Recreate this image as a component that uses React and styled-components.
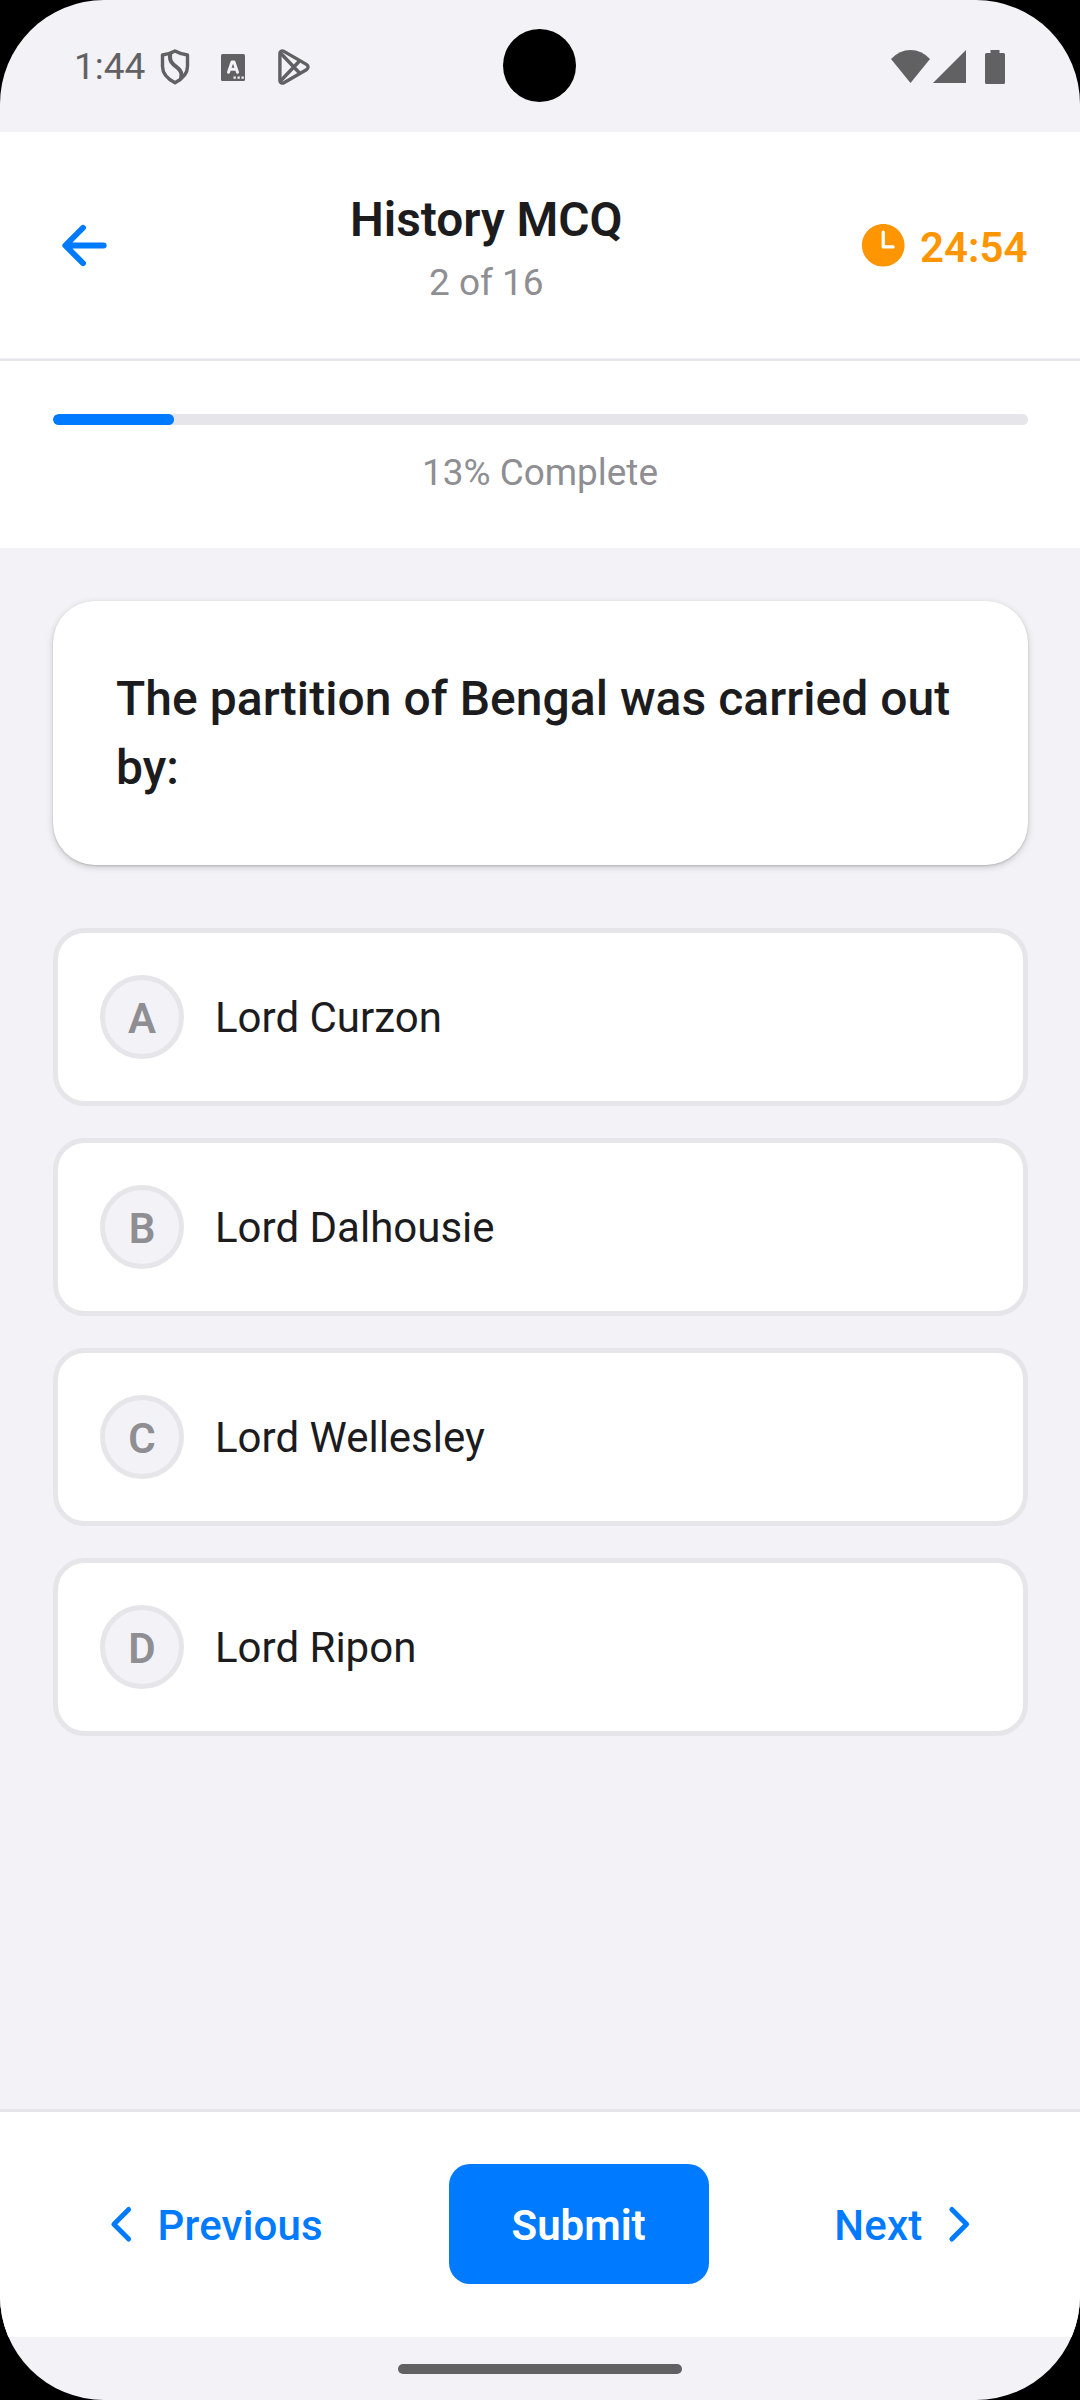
import React from 'react';
import styled, { createGlobalStyle } from 'styled-components';
import { IoArrowBack, IoChevronBack, IoChevronForward, IoTime } from 'react-icons/io5';

const GlobalStyle = createGlobalStyle`
    * {
        box-sizing: border-box;
    }

    body {
        margin: 0;
        background: #000;
        font-family: Roboto, sans-serif;
    }

    button {
        border: 0;
        padding: 0;
        background: none;
        font-family: inherit;
    }

    svg {
        display: block;
        flex-shrink: 0;
    }
`;

const Screen = styled.div`
    position: relative;
    display: flex;
    flex-direction: column;
    width: 1080px;
    height: 2400px;
    overflow: hidden;
    border-radius: 104px;
    background: #f2f2f7;
    color: #1c1c1e;
`;

const StatusBar = styled.div`
    display: flex;
    justify-content: space-between;
    height: 132px;
    padding: 46px 72px 0 74px;
    color: #616163;
`;

const StatusGroup = styled.div`
    display: flex;
    align-items: center;
    height: 42px;
`;

const Clock = styled.span`
    width: 84px;
    font-size: 37px;
    line-height: 42px;
`;

const Camera = styled.div`
    position: absolute;
    top: 29px;
    left: 503px;
    width: 73px;
    height: 73px;
    border-radius: 50%;
    background: #000;
`;

const Header = styled.header`
    display: flex;
    align-items: center;
    justify-content: space-between;
    height: 229px;
    padding: 0 52.5px;
    border-bottom: 2px solid #e5e5ea;
    box-shadow: inset 0 -1px #f2f2f5;
    background: #fff;
`;

const BackButton = styled.button`
    color: #007aff;
`;

const Heading = styled.div`
    padding-top: 5px;
    text-align: center;
`;

const Title = styled.h1`
    margin: 0;
    font-size: 47.8px;
    font-weight: 600;
    line-height: 62px;
`;

const Counter = styled.div`
    margin-top: 7px;
    color: #8e8e93;
    font-size: 37px;
    line-height: 50px;
`;

const Timer = styled.div`
    display: flex;
    align-items: center;
    gap: 10.5px;
    color: #ff9500;
    font-size: 42px;
    font-weight: 600;
    line-height: 56px;
`;

const TimeLeft = styled.span`
    padding-top: 4px;
`;

const Progress = styled.section`
    height: 187px;
    padding: 53px 52.5px 0;
    background: #fff;
`;

const Track = styled.div`
    height: 11px;
    overflow: hidden;
    border-radius: 5.25px;
    background: #e5e5ea;
`;

const Fill = styled.div`
    height: 100%;
    border-radius: 5.25px;
    background: #007aff;
`;

const ProgressLabel = styled.div`
    margin-top: 23px;
    color: #8e8e93;
    font-size: 36.9px;
    line-height: 50px;
    text-align: center;
`;

const Content = styled.main`
    flex: 1;
    padding: 53px 52px 0 53px;
`;

const QuestionCard = styled.div`
    height: 264px;
    padding: 64px 63px 0;
    border-radius: 42px;
    background: #fff;
    box-shadow: 0 2px 7px rgba(0, 0, 0, 0.18), 0 1px 2px rgba(0, 0, 0, 0.14);
`;

const Question = styled.p`
    margin: 0;
    font-size: 48px;
    font-weight: 500;
    letter-spacing: 0.04px;
    line-height: 68.5px;
`;

const Options = styled.div`
    display: flex;
    flex-direction: column;
    gap: 32px;
    margin-top: 63px;
`;

const Option = styled.button`
    display: flex;
    align-items: center;
    gap: 31px;
    height: 178px;
    padding: 0 42px;
    border: 5px solid #e5e5ea;
    border-radius: 31.5px;
    background: #fff;
    color: #1c1c1e;
    font-size: 42px;
    text-align: left;
`;

const Letter = styled.span`
    display: flex;
    align-items: center;
    justify-content: center;
    width: 84px;
    height: 84px;
    padding-top: 2px;
    border: 5px solid #e5e5ea;
    border-radius: 50%;
    background: #f2f2f7;
    color: #8e8e93;
    font-weight: 600;
`;

const Footer = styled.footer`
    display: flex;
    align-items: center;
    justify-content: space-between;
    height: 228px;
    padding: 0 52.5px 1px;
    border-top: 3px solid #e5e5ea;
    background: #fff;
`;

const NavButton = styled.button`
    display: flex;
    align-items: center;
    gap: 10.5px;
    padding: 0 42px;
    color: #007aff;
    font-size: 42px;
    font-weight: 500;
    letter-spacing: 0.2px;
    line-height: 56px;
`;

const NavLabel = styled.span`
    padding-top: 3px;
`;

const SubmitButton = styled.button`
    height: 120px;
    padding: 3px 63px 0;
    border-radius: 21px;
    background: #007aff;
    color: #fff;
    font-size: 42px;
    font-weight: 600;
`;

const GestureBar = styled.div`
    display: flex;
    justify-content: center;
    height: 63px;
    padding-top: 27px;
`;

const Handle = styled.div`
    width: 284px;
    height: 10px;
    border-radius: 5px;
    background: #616163;
`;

const StatusIcon = styled.svg`
    margin-left: ${({ $gap = 0 }) => $gap}px;
`;

const options = [
    { letter: 'A', text: 'Lord Curzon' },
    { letter: 'B', text: 'Lord Dalhousie' },
    { letter: 'C', text: 'Lord Wellesley' },
    { letter: 'D', text: 'Lord Ripon' },
];

function ShieldIcon() {
    return (
        <StatusIcon $gap={2} width="30" height="36" viewBox="0 0 30 36" fill="none" stroke="currentColor" strokeWidth="3.4" strokeLinejoin="round">
            <path d="M15 2C11.5 4 7 5.500 2.500 6v11.500c0 7 5 12.300 12.500 16.300 7.500-4 12.500-9.300 12.500-16.300V6C23 5.500 18.500 4 15 2Z" />
            <path d="M10.500 4c-1.500 5.500-.5 8.500 3 11.500l4.500 3.700c3.500 2.800 4.200 6 3 10" strokeWidth="4" />
        </StatusIcon>
    );
}

function LetterBoxIcon() {
    return (
        <StatusIcon $gap={31} width="24" height="27" viewBox="0 0 24 27">
            <rect width="24" height="27" rx="1.500" fill="currentColor" />
            <path d="M7.500 18.300 11 8h2l3.500 10.300M9 15.300h6" fill="none" stroke="#f2f2f7" strokeWidth="3" strokeLinecap="round" strokeLinejoin="round" />
            <path d="M12.500 22.500h2.300v2.300h-2.300zM16.500 22.500h2.300v2.300h-2.300zM20.500 22.500h2.300v2.300h-2.300z" fill="#f2f2f7" />
        </StatusIcon>
    );
}

function PlayIcon() {
    return (
        <StatusIcon $gap={32} width="34" height="38" viewBox="0 0 34 38" fill="none" stroke="currentColor" strokeWidth="3.400" strokeLinejoin="round">
            <path d="M2.900 5.500v27c0 2.200 2 3.300 4 2.200l22.500-13c2.200-1.300 2.200-4 0-5.300l-22.500-13c-2-1.200-4-.1-4 2.100Z" />
            <path d="M3.500 5 22.500 25M3.500 33 22.500 13" />
        </StatusIcon>
    );
}

function App() {
    return (
        <>
            <GlobalStyle />
            <Screen>
                <StatusBar>
                    <StatusGroup>
                        <Clock>1:44</Clock>
                        <ShieldIcon />
                        <LetterBoxIcon />
                        <PlayIcon />
                    </StatusGroup>
                    <StatusGroup>
                        <StatusIcon width="39" height="36" viewBox="0 0 39 36" fill="currentColor">
                            <path d="M0 10Q8.500 1 19.500 1T39 10L19.500 34Z" />
                        </StatusIcon>
                        <StatusIcon $gap={3} width="33" height="36" viewBox="0 0 33 36" fill="currentColor">
                            <path d="M33 1v33H0Z" />
                        </StatusIcon>
                        <StatusIcon $gap={19} width="23" height="36" viewBox="0 0 23 36" fill="currentColor">
                            <path d="M5.500 1h9v3h4q1.500 0 1.500 1.500v28q0 1.500-1.500 1.500h-17q-1.500 0-1.500-1.500v-28q0-1.500 1.500-1.500h4Z" />
                        </StatusIcon>
                    </StatusGroup>
                </StatusBar>
                <Header>
                    <BackButton><IoArrowBack size={63} /></BackButton>
                    <Heading>
                        <Title>History MCQ</Title>
                        <Counter>2 of 16</Counter>
                    </Heading>
                    <Timer>
                        <IoTime size={52.5} />
                        <TimeLeft>24:54</TimeLeft>
                    </Timer>
                </Header>
                <Progress>
                    <Track>
                        <Fill style={{ width: `${(2 / 16) * 100}%` }} />
                    </Track>
                    <ProgressLabel>13% Complete</ProgressLabel>
                </Progress>
                <Content>
                    <QuestionCard>
                        <Question>The partition of Bengal was carried out by:</Question>
                    </QuestionCard>
                    <Options>
                        {options.map(({ letter, text }) => (
                            <Option key={letter}>
                                <Letter>{letter}</Letter>
                                {text}
                            </Option>
                        ))}
                    </Options>
                </Content>
                <Footer>
                    <NavButton>
                        <IoChevronBack size={52.5} />
                        <NavLabel>Previous</NavLabel>
                    </NavButton>
                    <SubmitButton>Submit</SubmitButton>
                    <NavButton>
                        <NavLabel>Next</NavLabel>
                        <IoChevronForward size={52.5} />
                    </NavButton>
                </Footer>
                <GestureBar>
                    <Handle />
                </GestureBar>
                <Camera />
            </Screen>
        </>
    );
}

export default App;
